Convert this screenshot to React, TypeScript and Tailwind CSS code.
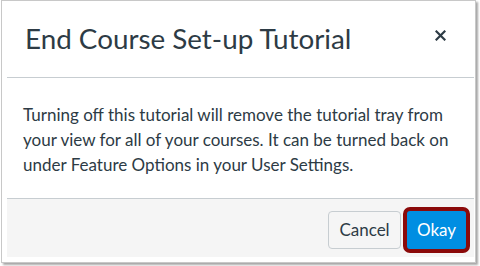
import React from "react";

export default function App() {
  return (
    <div className="w-[480px] h-[266px] bg-white" style={{ fontFamily: "Lato, 'Noto Sans', sans-serif" }}>
      <div className="ml-px w-[475px] h-[263px] border border-[#c8c8c8] bg-white pl-[5px] pr-px pb-[5px] flex flex-col shadow-[2px_2px_2px_rgba(0,0,0,0.35)]">
        <div className="h-[77px] flex items-center justify-between pl-[18px] pr-[28px] border-b border-[#c7cdd1] text-[#2d3b45]">
          <h1 className="text-[27.8px] font-normal leading-none mt-[-1px]">End Course Set-up Tutorial</h1>
          <svg width="11" height="11" viewBox="0 0 11 11" className="mt-[-8px]">
            <path d="M1.5 1.5 L9.5 9.5 M9.5 1.5 L1.5 9.5" stroke="#2d3b45" strokeWidth="2.2" strokeLinecap="square" />
          </svg>
        </div>
        <div className="flex-1 pl-[16px] pr-[10px] pt-[24px] text-[17px] leading-[25px] text-[#2d3b45]">
          Turning off this tutorial will remove the tutorial tray from your view for all of your courses. It can be turned back on under Feature Options in your User Settings.
        </div>
        <div className="h-[59px] bg-[#f5f5f5] border-t border-[#c7cdd1] flex items-center justify-end gap-[2px] pr-[4px] pt-[4px]">
          <button className="h-[38px] w-[73px] rounded-[4px] border border-[#c7cdd1] bg-[#f5f5f5] text-[#2d3b45] text-[17px]">Cancel</button>
          <button className="h-[46px] w-[67px] rounded-[7px] border-[4px] border-[#8b0a0a] bg-[#008ee2] text-white text-[17px]">Okay</button>
        </div>
      </div>
    </div>
  );
}
